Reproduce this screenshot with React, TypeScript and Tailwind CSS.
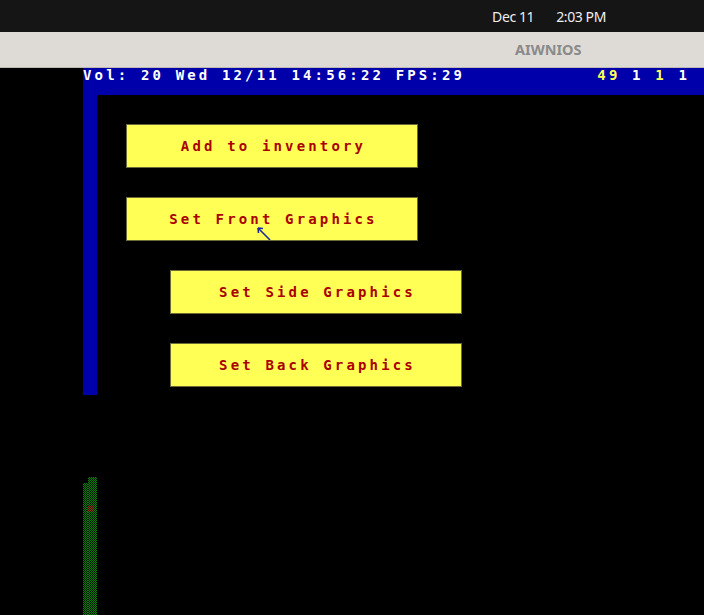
import React from "react";

const mono = { fontFamily: '"DejaVu Sans Mono", "Liberation Mono", monospace' };

const Btn = ({ label, indent }: { label: string; indent: boolean }) => (
  <div
    className={`flex h-[44px] w-[292px] items-center justify-center border border-[#6b6b3a] bg-[#ffff55] ${
      indent ? "ml-[73px]" : "ml-[29px]"
    }`}
  >
    <span className="pl-[3px] text-[14px] font-bold leading-none tracking-[3.15px] text-[#aa0000]" style={mono}>
      {label}
    </span>
  </div>
);

const App = () => {
  return (
    <div className="flex h-[615px] w-[704px] flex-col overflow-hidden bg-black">
      {/* desktop top bar */}
      <div
        className="flex h-[32px] items-center justify-end gap-[22px] bg-[#151515] pr-[98px] text-[14px] text-[#eeeeee]"
        style={{ fontFamily: '"Noto Sans", "Open Sans", sans-serif' }}
      >
        <span className="tracking-[-0.4px]">Dec 11</span>
        <span className="tracking-[-0.4px]">2:03 PM</span>
      </div>
      {/* window title bar */}
      <div
        className="flex h-[36px] items-center border-b border-[#bdb9b4] bg-[#dedbd7] pl-[515px] text-[14.5px] font-bold text-[#8a8a8a]"
        style={{ fontFamily: '"Noto Sans", "Open Sans", sans-serif' }}
      >
        AIWNIOS
      </div>

      {/* status bar */}
      <div
        className="ml-[83px] flex h-[27px] items-start justify-between bg-[#0000aa] pr-[14px] pt-[1px] text-[14px] font-bold leading-[12px] tracking-[3.15px] text-white"
        style={mono}
      >
        <span>Vol: 20 Wed 12/11 14:56:22 FPS:29</span>
        <span>
          <span className="text-[#ffff55]">49</span> 1 <span className="text-[#ffff55]">1</span> 1
        </span>
      </div>

      <div className="relative flex flex-1">
        {/* left border column */}
        <div className="ml-[83px] flex w-[14px] flex-col">
          <div className="h-[300px] bg-[#0000aa]" />
          <div className="h-[82px]" />
          <div className="flex flex-1">
            <div className="mt-[6px] w-[5px] bg-[repeating-conic-gradient(#0b7a0b_0_25%,#021a02_0_50%)] bg-[length:2px_2px]" />
            <div className="relative flex-1 bg-[repeating-conic-gradient(#0b7a0b_0_25%,#021a02_0_50%)] bg-[length:2px_2px]">
              <div className="absolute left-[-1px] top-[29px] h-[6px] w-[7px] bg-[repeating-conic-gradient(#8a3a10_0_25%,#2a1a05_0_50%)] bg-[length:2px_2px]" />
            </div>
          </div>
        </div>

        {/* menu */}
        <div className="flex flex-col gap-[29px] pt-[29px]">
          <Btn label="Add to inventory" indent={false} />
          <Btn label="Set Front Graphics" indent={false} />
          <Btn label="Set Side Graphics" indent />
          <Btn label="Set Back Graphics" indent />
        </div>

        {/* mouse pointer */}
        <svg className="absolute left-[256px] top-[131px]" width="16" height="16" viewBox="0 0 16 16">
          <path d="M2 2 L14 14" stroke="#1a2a9a" strokeWidth="1.6" fill="none" />
          <path d="M2 2 L7 2.5 M2 2 L2.5 7" stroke="#1a2a9a" strokeWidth="1.6" fill="none" />
        </svg>
      </div>
    </div>
  );
};

export default App;
